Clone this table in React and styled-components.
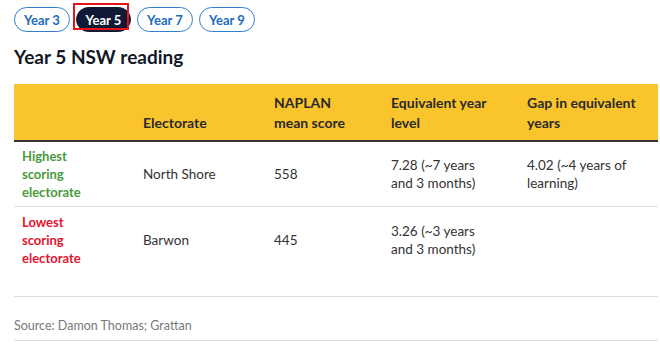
import React from "react";
import styled, { createGlobalStyle } from "styled-components";

const Global = createGlobalStyle`
  html, body { margin: 0; padding: 0; background: #fff; }
  body { font-family: Lato, "Liberation Sans", sans-serif; color: #333; }
`;

const Page = styled.div`
  padding: 7px 0 0 14px;
  width: 644px;
`;

const Tabs = styled.div`
  display: flex;
  gap: 6px;
  height: 25px;
`;

const TabWrap = styled.div`
  position: relative;
`;

const Tab = styled.button`
  box-sizing: border-box;
  height: 25px;
  width: ${(p) => (p.$active ? 55 : 56)}px;
  border-radius: 13px;
  border: 1px solid ${(p) => (p.$active ? "#101a36" : "#2f7fd0")};
  background: ${(p) => (p.$active ? "#101a36" : "#fff")};
  color: ${(p) => (p.$active ? "#fff" : "#1c6cc0")};
  font-family: Lato, "Liberation Sans", sans-serif;
  font-weight: 700;
  font-size: 13px;
  padding: 0;
  cursor: pointer;
`;

const Focus = styled.span`
  position: absolute;
  left: -3px;
  top: -4px;
  width: 52px;
  height: 23px;
  border: 2px solid #e3141c;
  pointer-events: none;
`;

const Title = styled.h2`
  margin: 13px 0 15px;
  font-size: 19px;
  line-height: 24px;
  font-weight: 700;
  color: #121826;
`;

const Table = styled.table`
  width: 644px;
  border-collapse: collapse;
  table-layout: fixed;
`;

const Th = styled.th`
  background: #fac42c;
  text-align: left;
  vertical-align: bottom;
  font-size: 14px;
  line-height: 20px;
  font-weight: 700;
  color: #2a2a2a;
  padding: 9px ${(p) => (p.$last ? 8 : 30)}px 7px 8px;
  border-bottom: 2px solid #333;
`;

const Td = styled.td`
  font-size: 13.5px;
  line-height: 18px;
  color: #333;
  vertical-align: middle;
  padding: ${(p) => (p.$tall ? "6px" : "5px")} ${(p) => (p.$last ? 8 : 30)}px
    ${(p) => (p.$tall ? "29px" : "5px")} 8px;
  border-bottom: 1px solid #dedde6;
`;

const Label = styled(Td)`
  font-size: 13px;
  font-weight: 700;
  color: ${(p) => p.$color};
`;

const Source = styled.div`
  font-size: 12.5px;
  line-height: 16px;
  color: #787878;
  padding: 21px 0 6px;
  border-bottom: 1px solid #dedde6;
`;

const headers = ["", "Electorate", "NAPLAN mean score", "Equivalent year level", "Gap in equivalent years"];
const widths = [121, 131, 117, 136, 139];

const rows = [
  {
    label: "Highest scoring electorate",
    color: "#4a9a3c",
    cells: ["North Shore", "558", "7.28 (~7 years and 3 months)", "4.02 (~4 years of learning)"],
  },
  {
    label: "Lowest scoring electorate",
    color: "#e3142d",
    cells: ["Barwon", "445", "3.26 (~3 years and 3 months)", ""],
    tall: true,
  },
];

export default function App() {
  return (
    <>
      <Global />
      <Page>
        <Tabs>
          <Tab>Year 3</Tab>
          <TabWrap>
            <Tab $active>Year 5</Tab>
            <Focus />
          </TabWrap>
          <Tab>Year 7</Tab>
          <Tab>Year 9</Tab>
        </Tabs>
        <Title>Year 5 NSW reading</Title>
        <Table>
          <colgroup>
            {widths.map((w, i) => (
              <col key={i} style={{ width: w }} />
            ))}
          </colgroup>
          <thead>
            <tr>
              {headers.map((h, i) => (
                <Th key={i} $last={i === headers.length - 1}>{h}</Th>
              ))}
            </tr>
          </thead>
          <tbody>
            {rows.map((r) => (
              <tr key={r.label}>
                <Label $color={r.color} $tall={r.tall}>{r.label}</Label>
                {r.cells.map((c, i) => (
                  <Td key={i} $tall={r.tall} $last={i === r.cells.length - 1}>
                    {c}
                  </Td>
                ))}
              </tr>
            ))}
          </tbody>
        </Table>
        <Source>Source: Damon Thomas; Grattan</Source>
      </Page>
    </>
  );
}
